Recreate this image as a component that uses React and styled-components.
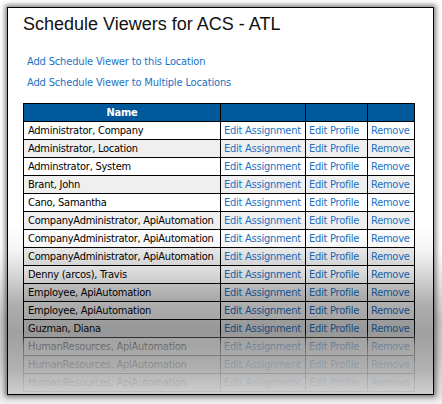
import React from 'react';
import styled, { createGlobalStyle } from 'styled-components';

const GlobalStyle = createGlobalStyle`
  html, body {
    margin: 0;
    padding: 0;
    background: #fff;
  }
`;

const Page = styled.div`
  width: 442px;
  height: 404px;
  box-sizing: border-box;
  padding: 7px 0 0 7px;
  overflow: hidden;
  background: linear-gradient(
    to bottom,
    #ffffff 0px,
    #ffffff 250px,
    #c4c4c4 320px,
    #cbcbcb 360px,
    #e6e6e6 396px,
    #f0f0f0 404px
  );
`;

const Panel = styled.div`
  position: relative;
  width: 427px;
  height: 388px;
  box-sizing: border-box;
  border: 1px solid #000;
  box-shadow: 0 0 5px 2px rgba(0, 0, 0, 0.5);
  background: #fff;
  overflow: hidden;
  padding: 6px 0 0 15px;

  /* faded bottom of the screenshot */
  &::after {
    content: '';
    position: absolute;
    inset: 0;
    pointer-events: none;
    background: linear-gradient(
      to bottom,
      rgba(0, 0, 0, 0) 0px,
      rgba(0, 0, 0, 0) 217px,
      rgba(0, 0, 0, 0.04) 242px,
      rgba(0, 0, 0, 0.16) 267px,
      rgba(0, 0, 0, 0.32) 297px,
      rgba(20, 20, 20, 0.4) 324px,
      rgba(140, 140, 140, 0.78) 338px,
      rgba(168, 168, 168, 0.88) 362px,
      rgba(205, 205, 205, 0.96) 386px
    );
  }
`;

const Title = styled.h1`
  margin: 0;
  font-family: "Liberation Sans", Arial, sans-serif;
  font-weight: normal;
  font-size: 18px;
  line-height: 20px;
  color: #111;
`;

const Links = styled.div`
  margin-top: 17px;
  padding-left: 4px;
`;

const Link = styled.a`
  display: block;
  font-family: "DejaVu Sans Condensed", "Liberation Sans", sans-serif;
  font-size: 11px;
  letter-spacing: -0.15px;
  line-height: 21px;
  color: #1a72c4;
  text-decoration: none;
  cursor: pointer;
`;

const Table = styled.table`
  margin-top: 10px;
  width: 391px;
  table-layout: fixed;
  border-collapse: collapse;
  font-family: "DejaVu Sans Condensed", "Liberation Sans", sans-serif;
  font-size: 11px;
  letter-spacing: -0.25px;
  line-height: 15px;
`;

const HeadCell = styled.th`
  background: #00599a;
  color: #fff;
  font-weight: bold;
  text-align: center;
  border: 1px solid #000;
  padding: 1px 3px;
  height: 15px;
`;

const Row = styled.tr`
  background: ${p => (p.$alt ? '#efefef' : '#fff')};
`;

const Cell = styled.td`
  border: 1px solid #000;
  padding: 1px 2px 1px ${p => (p.$name ? '4px' : '3px')};
  color: #000;
  white-space: nowrap;
`;

const Action = styled.a`
  color: #1a72c4;
  text-decoration: none;
  cursor: pointer;
`;

const viewers = [
  'Administrator, Company',
  'Administrator, Location',
  'Adminstrator, System',
  'Brant, John',
  'Cano, Samantha',
  'CompanyAdministrator, ApiAutomation',
  'CompanyAdministrator, ApiAutomation',
  'CompanyAdministrator, ApiAutomation',
  'Denny (arcos), Travis',
  'Employee, ApiAutomation',
  'Employee, ApiAutomation',
  'Guzman, Diana',
  'HumanResources, ApiAutomation',
  'HumanResources, ApiAutomation',
  'HumanResources, ApiAutomation',
];

const App = () => {
  return (
    <Page>
      <GlobalStyle />
      <Panel>
        <Title>Schedule Viewers for ACS - ATL</Title>

        <Links>
          <Link>Add Schedule Viewer to this Location</Link>
          <Link>Add Schedule Viewer to Multiple Locations</Link>
        </Links>

        <Table>
          <colgroup>
            <col style={{ width: 197 }} />
            <col style={{ width: 85 }} />
            <col style={{ width: 62 }} />
            <col style={{ width: 47 }} />
          </colgroup>
          <thead>
            <tr>
              <HeadCell>Name</HeadCell>
              <HeadCell />
              <HeadCell />
              <HeadCell />
            </tr>
          </thead>
          <tbody>
            {viewers.map((name, i) => (
              <Row key={i} $alt={i % 2 === 1}>
                <Cell $name>{name}</Cell>
                <Cell><Action>Edit Assignment</Action></Cell>
                <Cell><Action>Edit Profile</Action></Cell>
                <Cell><Action>Remove</Action></Cell>
              </Row>
            ))}
          </tbody>
        </Table>
      </Panel>
    </Page>
  );
};

export default App;
